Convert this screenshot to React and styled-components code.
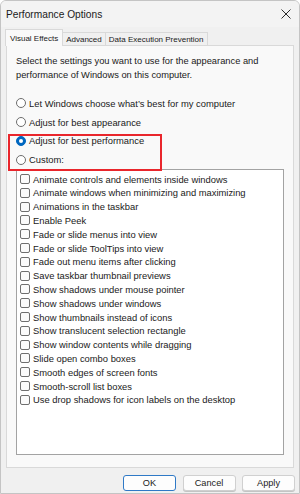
import styled, { createGlobalStyle } from "styled-components";

const GlobalStyle = createGlobalStyle`
  html, body {
    margin: 0;
    padding: 0;
    background: #ffffff;
  }
  * {
    box-sizing: border-box;
  }
`;

const Window = styled.div`
  width: 300px;
  height: 494px;
  display: flex;
  flex-direction: column;
  background: #f0f0f0;
  border: 1px solid #c4c4c4;
  border-radius: 6px 6px 0 0;
  font-family: "Liberation Sans", Arial, sans-serif;
  color: #1a1a1a;
  overflow: hidden;
`;

const TitleBar = styled.div`
  height: 26px;
  flex: none;
  display: flex;
  align-items: center;
  justify-content: space-between;
  padding: 0 6px 0 5px;
  background: #f3f3f3;
  font-size: 10.2px;
`;

const CloseButton = styled.button`
  border: 0;
  background: none;
  padding: 0;
  width: 14px;
  height: 14px;
  display: flex;
  align-items: center;
  justify-content: center;
  color: #2b2b2b;
`;

const Body = styled.div`
  flex: 1;
  display: flex;
  flex-direction: column;
  padding: 2px 5px 0 4px;
`;

const TabStrip = styled.div`
  display: flex;
  align-items: flex-end;
  height: 17px;
  flex: none;
`;

const Tab = styled.div`
  height: ${(p) => (p.$active ? "17px" : "14px")};
  padding: 0 ${(p) => (p.$active ? "4px" : "3px")};
  display: flex;
  align-items: center;
  font-size: 8px;
  background: ${(p) => (p.$active ? "#f9f9f9" : "#f0f0f0")};
  border: 1px solid #d9d9d9;
  border-bottom: ${(p) => (p.$active ? "none" : "1px solid #d9d9d9")};
  margin-left: ${(p) => (p.$active ? "0" : "-1px")};
  position: relative;
  z-index: ${(p) => (p.$active ? 1 : 0)};
`;

const Panel = styled.div`
  height: 423px;
  margin-top: -1px;
  margin-left: 1px;
  background: #f9f9f9;
  border: 1px solid #d9d9d9;
  padding: 8px 9px 12px 9px;
  display: flex;
  flex-direction: column;
`;

const Intro = styled.p`
  margin: 0 0 12px 0;
  font-size: 9.3px;
  line-height: 14px;
  color: #1a1a1a;
`;

const RadioList = styled.div`
  position: relative;
  display: flex;
  flex-direction: column;
`;

const RadioRow = styled.label`
  display: flex;
  align-items: center;
  height: 18.8px;
  gap: 3px;
  font-size: 9.4px;
`;

const RadioDot = styled.span`
  width: 10px;
  height: 10px;
  border-radius: 50%;
  flex: none;
  background: ${(p) => (p.$checked ? "#0067c0" : "#ffffff")};
  border: 1px solid ${(p) => (p.$checked ? "#0067c0" : "#6d6d6d")};
  display: flex;
  align-items: center;
  justify-content: center;

  &::after {
    content: "";
    display: ${(p) => (p.$checked ? "block" : "none")};
    width: 4px;
    height: 4px;
    border-radius: 50%;
    background: #ffffff;
  }
`;

const Highlight = styled.div`
  position: absolute;
  left: -8px;
  top: 40px;
  width: 154px;
  height: 37px;
  border: 2px solid #e9262c;
  pointer-events: none;
`;

const ListBox = styled.div`
  flex: 1;
  background: #ffffff;
  border: 1px solid #a3a3a3;
  padding: 2px 0 0 3px;
  display: flex;
  flex-direction: column;
`;

const CheckRow = styled.label`
  display: flex;
  align-items: center;
  height: 13.8px;
  gap: 3px;
  font-size: 9.4px;
  white-space: nowrap;
`;

const CheckBox = styled.span`
  width: 10px;
  height: 10px;
  flex: none;
  border: 1px solid #6f6f6f;
  border-radius: 2px;
  background: #fbfbfb;
`;

const ButtonRow = styled.div`
  flex: none;
  display: flex;
  justify-content: flex-end;
  gap: 6.5px;
  padding: 7px 0 5px 0;
  margin-right: -1px;
`;

const DialogButton = styled.button`
  width: 53px;
  height: 16px;
  padding: 0;
  font-family: "Liberation Sans", Arial, sans-serif;
  font-size: 9.2px;
  color: #1a1a1a;
  background: #fdfdfd;
  border: 1px solid ${(p) => (p.$default ? "#2f79c6" : "#d0d0d0")};
  border-radius: 3px;
  box-shadow: ${(p) => (p.$default ? "none" : "0 1px 0 #c4c4c4")};
`;

const radios = [
  { label: "Let Windows choose what\u2019s best for my computer" },
  { label: "Adjust for best appearance" },
  { label: "Adjust for best performance", checked: true },
  { label: "Custom:" },
];

const effects = [
  "Animate controls and elements inside windows",
  "Animate windows when minimizing and maximizing",
  "Animations in the taskbar",
  "Enable Peek",
  "Fade or slide menus into view",
  "Fade or slide ToolTips into view",
  "Fade out menu items after clicking",
  "Save taskbar thumbnail previews",
  "Show shadows under mouse pointer",
  "Show shadows under windows",
  "Show thumbnails instead of icons",
  "Show translucent selection rectangle",
  "Show window contents while dragging",
  "Slide open combo boxes",
  "Smooth edges of screen fonts",
  "Smooth-scroll list boxes",
  "Use drop shadows for icon labels on the desktop",
];

export default function App() {
  return (
    <>
      <GlobalStyle />
      <Window>
        <TitleBar>
          <span>Performance Options</span>
          <CloseButton aria-label="Close">
            <svg width="10" height="10" viewBox="0 0 10 10">
              <path d="M0.5 0.5 L9.5 9.5 M9.5 0.5 L0.5 9.5" stroke="currentColor" strokeWidth="1" />
            </svg>
          </CloseButton>
        </TitleBar>
        <Body>
          <TabStrip>
            <Tab $active>Visual Effects</Tab>
            <Tab>Advanced</Tab>
            <Tab>Data Execution Prevention</Tab>
          </TabStrip>
          <Panel>
            <Intro>
              Select the settings you want to use for the appearance and
              <br />
              performance of Windows on this computer.
            </Intro>
            <RadioList>
              {radios.map((r) => (
                <RadioRow key={r.label}>
                  <RadioDot $checked={r.checked} />
                  {r.label}
                </RadioRow>
              ))}
              <Highlight />
            </RadioList>
            <ListBox>
              {effects.map((e) => (
                <CheckRow key={e}>
                  <CheckBox />
                  {e}
                </CheckRow>
              ))}
            </ListBox>
          </Panel>
          <ButtonRow>
            <DialogButton $default>OK</DialogButton>
            <DialogButton>Cancel</DialogButton>
            <DialogButton>Apply</DialogButton>
          </ButtonRow>
        </Body>
      </Window>
    </>
  );
}
